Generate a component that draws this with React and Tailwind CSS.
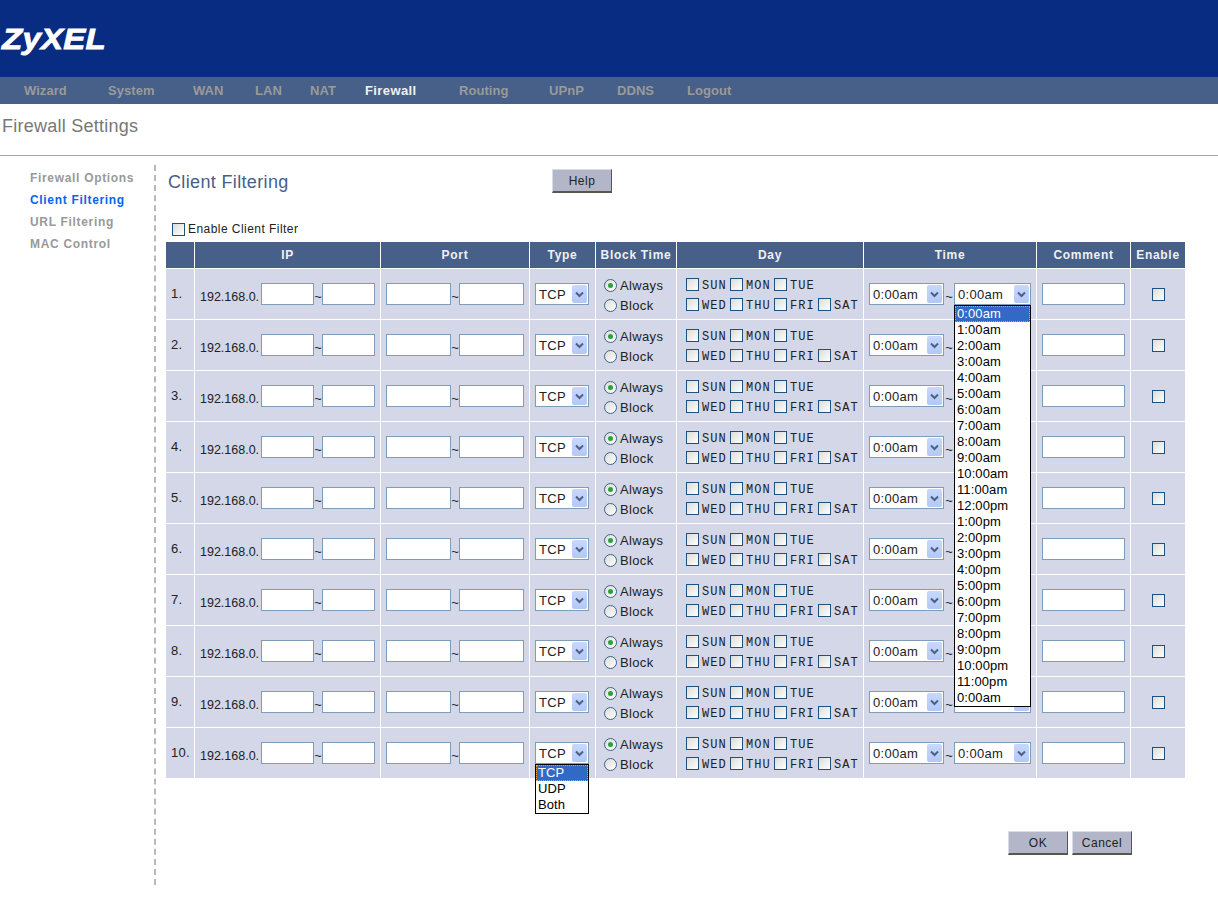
import React from 'react';

const navItems = [
  { label: 'Wizard', width: 'w-[84px]' },
  { label: 'System', width: 'w-[85px]' },
  { label: 'WAN', width: 'w-[62px]' },
  { label: 'LAN', width: 'w-[55px]' },
  { label: 'NAT', width: 'w-[55px]' },
  { label: 'Firewall', width: 'w-[94px]', active: true },
  { label: 'Routing', width: 'w-[90px]' },
  { label: 'UPnP', width: 'w-[68px]' },
  { label: 'DDNS', width: 'w-[70px]' },
  { label: 'Logout', width: 'w-[60px]' },
];

const sideItems = [
  { label: 'Firewall Options' },
  { label: 'Client Filtering', active: true },
  { label: 'URL Filtering' },
  { label: 'MAC Control' },
];

const headers = ['', 'IP', 'Port', 'Type', 'Block Time', 'Day', 'Time', 'Comment', 'Enable'];
const rows = [1, 2, 3, 4, 5, 6, 7, 8, 9, 10];
const days = [['SUN', 'MON', 'TUE'], ['WED', 'THU', 'FRI', 'SAT']];
const hours = [
  '0:00am', '1:00am', '2:00am', '3:00am', '4:00am', '5:00am', '6:00am', '7:00am', '8:00am', '9:00am',
  '10:00am', '11:00am', '12:00pm', '1:00pm', '2:00pm', '3:00pm', '4:00pm', '5:00pm', '6:00pm', '7:00pm',
  '8:00pm', '9:00pm', '10:00pm', '11:00pm', '0:00am',
];

const TextBox = ({ className }) => (
  <input readOnly className={`h-[22px] border border-[#7f9db9] bg-white ${className}`} />
);

const Check = () => (
  <span className="inline-block w-[13px] h-[13px] shrink-0 border border-[#1c5180] bg-linear-to-br from-[#dcdcd7] to-white" />
);

const Radio = ({ checked }) => (
  <span className="flex items-center justify-center w-[13px] h-[13px] shrink-0 rounded-full border border-[#3f6489] bg-linear-to-br from-[#dcdcd7] to-white">
    {checked && <span className="w-[5px] h-[5px] rounded-full bg-[#2aa43a]" />}
  </span>
);

const Tilde = ({ className }) => (
  <span className={`pt-[4px] text-center text-[13px] leading-none ${className}`}>~</span>
);

const Dropdown = ({ value, options, width }) => (
  <div className={`relative flex items-center h-[22px] border border-[#7f9db9] bg-white ${width}`}>
    <span className="pl-[3px] flex-1 text-[13px] leading-none tracking-[0.3px] text-[#222]">{value}</span>
    <span className="flex items-center justify-center w-[15px] h-[18px] mr-px rounded-[2px] bg-linear-to-b from-[#c8d8fc] to-[#b4c8f6]">
      <svg width="9" height="7" viewBox="0 0 9 7" fill="none" stroke="#4d6185" strokeWidth="2">
        <path d="M1 1.5 L4.5 5 L8 1.5" />
      </svg>
    </span>
    {options && (
      <div className="absolute z-10 left-[-1px] right-[-1px] top-[21px] border border-black bg-white">
        {options.map((opt, i) => (
          <div
            key={i}
            className={`h-4 pl-[2px] text-[13px] leading-4 tracking-[0.1px] ${
              i === 0 ? 'bg-[#316ac5] text-white outline-1 -outline-offset-1 outline-dotted outline-[#e8a33c]' : 'text-black'
            }`}
          >
            {opt}
          </div>
        ))}
      </div>
    )}
  </div>
);

const XpButton = ({ label }) => (
  <button className="w-[60px] h-[24px] bg-[#b2b6c8] border border-t-[#d9dbe5] border-l-[#d9dbe5] border-r-[#55584a] border-b-[#55584a] border-b-2 text-xs tracking-[0.5px] text-[#222]">
    {label}
  </button>
);

const Cell = ({ className = '', children }) => (
  <div className={`bg-[#d3d7e8] flex items-center text-[#222] ${className}`}>{children}</div>
);

const Row = ({ n }) => (
  <>
    <Cell className="pl-[5px] text-[13px] tracking-[0.3px]">{n}.</Cell>
    <Cell className="pl-[5px] text-[13px]">
      <span className="w-[61px] pt-[7px] text-[12.5px] leading-none">192.168.0.</span>
      <TextBox className="w-[53px]" />
      <Tilde className="w-2" />
      <TextBox className="w-[53px]" />
    </Cell>
    <Cell className="pl-[5px]">
      <TextBox className="w-[65px]" />
      <Tilde className="w-2" />
      <TextBox className="w-[65px]" />
    </Cell>
    <Cell className="pl-[5px]">
      <Dropdown value="TCP" width="w-[54px]" options={n === 10 ? ['TCP', 'UDP', 'Both'] : null} />
    </Cell>
    <Cell className="pl-2 pt-[2px] flex-col items-start! justify-center gap-[7px] text-[13px] leading-[13px] tracking-[0.35px]">
      <div className="flex items-center gap-[3px]"><Radio checked />Always</div>
      <div className="flex items-center gap-[3px]"><Radio />Block</div>
    </Cell>
    <Cell className="pl-[9px] pt-[1px] flex-col items-start! justify-center gap-[4px]">
      {days.map((line, i) => (
        <div key={i} className="flex items-center">
          {line.map((d) => (
            <div key={d} className="flex items-center w-11 font-['Liberation_Mono',monospace] text-xs leading-[14px]">
              <Check />
              <span className="pl-[3px] pt-[2px] tracking-[1px]">{d}</span>
            </div>
          ))}
        </div>
      ))}
    </Cell>
    <Cell className="pl-[5px]">
      <Dropdown value="0:00am" width="w-[75px]" />
      <Tilde className="w-[10px]" />
      <Dropdown value="0:00am" width="w-[77px]" options={n === 1 ? hours : null} />
    </Cell>
    <Cell className="pl-[5px]">
      <TextBox className="w-[83px]" />
    </Cell>
    <Cell className="justify-center">
      <Check />
    </Cell>
  </>
);

export default function App() {
  return (
    <div className="w-[1218px] h-[918px] overflow-hidden bg-white font-['Liberation_Sans',Arial,sans-serif]">
      <div className="h-[77px] bg-[#082c82] flex items-center pl-[2px] pt-[2px]">
        <span className="inline-block origin-left scale-x-[1.14] text-[29px] leading-none font-bold italic tracking-[0.2px] text-white [-webkit-text-stroke:0.8px_white]">
          ZyXEL
        </span>
      </div>
      <div className="h-[27px] bg-[#466089] flex items-center pl-6">
        {navItems.map((item) => (
          <span
            key={item.label}
            className={`${item.width} shrink-0 text-[13px] font-bold ${item.active ? 'tracking-[0.4px] text-[#f0f0f0]' : 'tracking-[0.05px] text-[#9a9a9a]'}`}
          >
            {item.label}
          </span>
        ))}
      </div>
      <div className="h-[52px] border-b border-[#a8a89e] pl-[2px] pt-[11px] text-lg leading-[22px] tracking-[0.25px] text-[#777]">
        Firewall Settings
      </div>
      <div className="flex">
        <div className="w-[156px] h-[720px] mt-[9px] shrink-0 border-r-2 border-dashed border-[#b8b8b8] pl-[30px] pt-[2px]">
          {sideItems.map((item) => (
            <div
              key={item.label}
              className={`h-[22px] text-xs leading-[22px] font-bold tracking-[0.68px] ${item.active ? 'text-[#0a64f0]' : 'text-[#999]'}`}
            >
              {item.label}
            </div>
          ))}
        </div>
        <div className="ml-[10px] w-[1019px] mt-[13px]">
          <div className="flex h-[24px]">
            <div className="w-[386px] pl-[2px] pt-[1px] text-lg leading-[24px] tracking-[0.35px] text-[#466089]">Client Filtering</div>
            <XpButton label="Help" />
          </div>
          <div className="h-[49px] flex items-end pl-[6px] pb-[6px] gap-[3px] text-xs leading-[14px] tracking-[0.45px] text-[#222]">
            <Check />
            Enable Client Filter
          </div>
          <div className="grid grid-cols-[28px_185px_148px_65px_80px_186px_172px_93px_54px] grid-rows-[26px] auto-rows-[50px] gap-px">
            {headers.map((h, i) => (
              <div key={i} className="bg-[#466089] flex items-center justify-center text-xs font-bold tracking-[0.7px] text-[#f0f0f0]">
                {h}
              </div>
            ))}
            {rows.map((n) => (
              <Row key={n} n={n} />
            ))}
          </div>
          <div className="flex justify-end gap-1 mt-[53px] pr-[53px]">
            <XpButton label="OK" />
            <XpButton label="Cancel" />
          </div>
        </div>
      </div>
    </div>
  );
}
